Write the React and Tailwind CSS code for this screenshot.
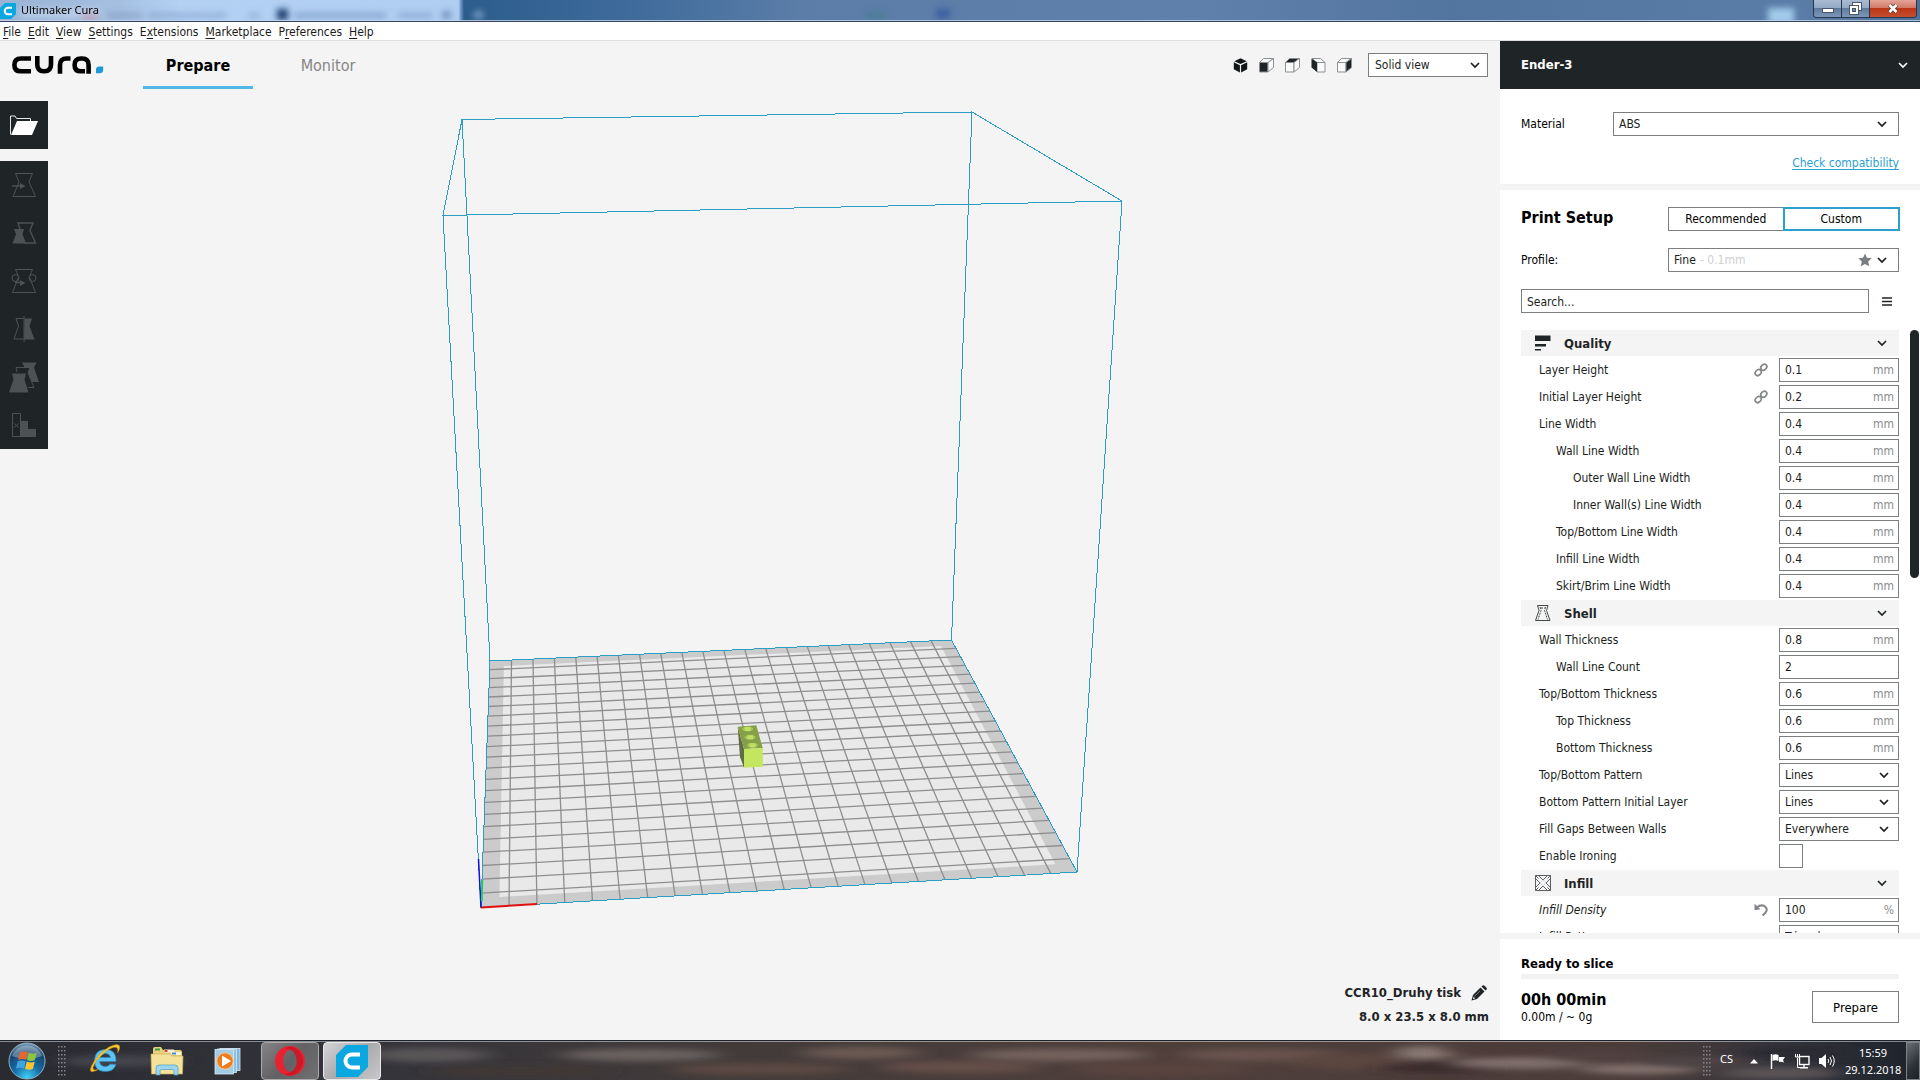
import React from 'react';

/* ---------- small icons ---------- */
function Chevron({ className = '' }) {
  return (
    <svg viewBox="0 0 10 7" className={`h-[7px] w-[10px] shrink-0 ${className}`} aria-hidden="true">
      <path d="M1 1l4 4 4-4" fill="none" stroke="currentColor" strokeWidth="1.700" />
    </svg>
  );
}

function CuraMark({ className }) {
  return (
    <svg viewBox="0 0 32 32" className={className} aria-hidden="true">
      <path d="M10 0h22v22L22 32H0V10z" fill="#0ba7e0" />
      <path d="M24 9.5h-8a6.5 6.5 0 0 0 0 13h8" fill="none" stroke="#fff" strokeWidth="4" />
    </svg>
  );
}

function CuraLogo() {
  return (
    <svg viewBox="0 0 92 18" className="h-[18px] w-[92px]" role="img" aria-label="cura.">
      <g fill="none" stroke="#000" strokeWidth="4.6">
        <path d="M19 2.5H9Q2.4 2.5 2.4 8.9T9 15.3H19" />
        <path d="M25.3 0V8.6Q25.3 15.3 31.8 15.3H32.4Q39 15.3 39 8.6V0" />
        <path d="M48 17.8V9Q48 2.5 54.5 2.5H58.5" />
        <path d="M76.6 17.8V9Q76.6 2.5 70.2 2.5H69Q62.6 2.5 62.6 8.9T69 15.3H73" />
      </g>
      <path d="M84 17.2V13.6Q84 10.4 87.2 10.4H91.2V13.8Q91.2 17.2 87.8 17.2z" fill="#1f9ad6" />
    </svg>
  );
}

const CUBE_FRONT = 'M.5 4.5h8.5v9.5H.5z';
const CUBE_TOP = 'M.5 4.5L4.5.5h10L9 4.5z';
const CUBE_SIDE = 'M9 4.5L14.5.5v9L9 14z';

function CubeIcon({ kind }) {
  if (kind === '3d') {
    return (
      <svg viewBox="0 0 15 15" className="size-[15px]" aria-hidden="true">
        <path d="M7.5.3l6.2 2.9-6.2 2.9-6.2-2.9z" fill="#111618" />
        <path d="M.8 4.3l6.1 2.9v7.3L.8 11.3zM14.2 4.3L8.1 7.2v7.3l6.1-3.2z" fill="#111618" />
      </svg>
    );
  }
  const dark = '#1f2426';
  if (kind === 'left') {
    return (
      <svg viewBox="0 0 15 15" className="size-[15px]" aria-hidden="true">
        <g stroke="#8b9092" strokeWidth="1" fill="#fafafa" strokeLinejoin="round">
          <path d="M1 .5h8.5l4.500 4H6z" />
          <path d="M6 4.500h8V14H6z" />
        </g>
        <path d="M.5.5L6 4.500V14L.5 9.500z" fill={dark} />
      </svg>
    );
  }
  return (
    <svg viewBox="0 0 15 15" className="size-[15px]" aria-hidden="true">
      <g stroke="#8b9092" strokeWidth="1" strokeLinejoin="round">
        <path d={CUBE_FRONT} fill={kind === 'front' ? dark : '#fafafa'} />
        <path d={CUBE_TOP} fill={kind === 'top' ? dark : '#fafafa'} />
        <path d={CUBE_SIDE} fill={kind === 'right' ? dark : '#fafafa'} />
      </g>
    </svg>
  );
}

function ToolIcon({ kind }) {
  const c = '#4d5254';
  const shapes = {
    move: (
      <>
        <path d="M15.500 12.500h17l-3.500 8.500 6.500 14.500h-22.500l6-14.500z" fill="none" stroke={c} />
        <path d="M12 25h9" stroke={c} strokeWidth="1.500" />
        <path d="M20 22l5.500 3-5.500 3z" fill={c} />
      </>
    ),
    scale: (
      <>
        <path d="M20 20l-2-6h15l-3 7.500 5.500 12.500H24" fill="none" stroke={c} strokeWidth="1.400" />
        <path d="M14 20h10l-1.500 5 3.500 9.500H12.500l3.500-9.500z" fill={c} />
      </>
    ),
    rotate: (
      <>
        <path d="M15.500 12.500h17l-3 7.500 6 15.500h-23l6-15.500z" fill="none" stroke={c} />
        <circle cx="15.500" cy="21" r="3.500" fill="none" stroke={c} />
        <circle cx="32.500" cy="21" r="3.500" fill="none" stroke={c} />
        <path d="M15 25.500h6" stroke={c} strokeWidth="1.500" />
        <path d="M20 23l5.500 3-5.500 3z" fill={c} />
      </>
    ),
    mirror: (
      <>
        <path d="M23.500 13.500h-7.500l2.500 7.500-4.500 13h9.500" fill="none" stroke={c} />
        <path d="M24.500 13.500h7.500l-2.500 7.500 5 13.500H24z" fill={c} />
        <path d="M24 11v26" stroke={c} />
      </>
    ),
    perModel: (
      <>
        <path d="M22 9.500h14.500l-2.500 5 5 14.500h-7l-4-10 2-4h-5z" fill={c} />
        <path d="M17 19l-1-4.500h14l-2 5.500 6 14.500h-6" fill="none" stroke={c} />
        <path d="M12 20.500h14l-1.500 6 4 13H9l4.500-13z" fill={c} />
      </>
    ),
    support: (
      <>
        <path d="M12.500 12.500h8v23h-8z" fill="none" stroke={c} />
        <path d="M20.500 20h7.500v8h8v8H20.500z" fill={c} />
        <path d="M14.500 22.500l4 4m0-4l-4 4" stroke={c} />
      </>
    ),
  };
  return (
    <svg viewBox="0 0 48 48" className="size-12" aria-hidden="true">
      {shapes[kind]}
    </svg>
  );
}

function OpenIcon() {
  return (
    <svg viewBox="0 0 48 48" className="size-12" aria-hidden="true">
      <path d="M10.500 33.500V15h4.500l1.500 2.500h14V20" fill="none" stroke="#e8e8e8" />
      <path d="M17 20h21l-6 14H11z" fill="#fff" />
    </svg>
  );
}

function LinkIcon() {
  return (
    <svg viewBox="0 0 14 14" className="size-3.5" aria-hidden="true">
      <g fill="none" stroke="#838688" strokeWidth="1.700">
        <ellipse cx="4.200" cy="9.600" rx="3.300" ry="2.600" transform="rotate(-45 4.200 9.600)" />
        <ellipse cx="9.800" cy="4.200" rx="3.300" ry="2.600" transform="rotate(-45 9.800 4.200)" />
      </g>
    </svg>
  );
}

function ResetIcon() {
  return (
    <svg viewBox="0 0 14 14" className="size-3.5" aria-hidden="true">
      <path d="M2.500 4.500Q8 .5 11.500 4T8.500 12.500" fill="none" stroke="#838688" strokeWidth="2" />
      <path d="M.5.8v6.400l6-1z" fill="#838688" />
    </svg>
  );
}

function CategoryIcon({ kind }) {
  if (kind === 'quality') {
    return (
      <svg viewBox="0 0 16 16" className="size-4" aria-hidden="true">
        <path d="M0 .5h15.500v5.500H0zM0 9h11v2.500H0zM0 14h6v1.500H0z" fill="#1f2426" />
      </svg>
    );
  }
  if (kind === 'shell') {
    return (
      <svg viewBox="0 0 16 16" className="size-4" aria-hidden="true">
        <g fill="none" stroke="#44494b" strokeWidth="1">
          <path d="M2.500.5h10.500l-1.500 5 3.500 10H.5L4 5.500z" />
          <path d="M5 2l1 3.500-3 9M10.500 2l-1 3.500 3 9M6 3h3.500" strokeDasharray="2 1" />
        </g>
      </svg>
    );
  }
  return (
    <svg viewBox="0 0 16 16" className="size-4" aria-hidden="true">
      <g fill="none" stroke="#4c5052" strokeWidth=".9">
        <path d="M.5.5h15v15H.5z" />
        <path d="M3.500.5l12 12M.5 3.500l12 12M12.500.5l-12 12M15.500 3.500l-12 12M.5.5l3 3M15.500.5l-3 3M.5 15.500l3-3M15.500 15.500l-3-3" />
      </g>
      <path d="M8 4.600L11.400 8 8 11.400 4.600 8z" fill="#f4f4f4" />
    </svg>
  );
}

/* ---------- window chrome ---------- */
function TitleBar() {
  return (
    <header className="grid h-[22px] shrink-0 overflow-hidden border-b border-[#34455e] bg-[linear-gradient(90deg,#8fa9cc_0,#9db8dc_120px,#aecdf2_180px,#a9caf0_458px,#2c5d8b_464px,#3d6a9a_620px,#5b7da8_800px,#5f80aa_1200px,#52759f_1450px,#5a7da8_1800px,#4f7099_100%)]">
      <svg className="h-[21px] w-full [grid-area:1/1]" aria-hidden="true">
        <defs>
          <filter id="soft" x="-30%" y="-100%" width="160%" height="300%">
            <feGaussianBlur stdDeviation="3" />
          </filter>
        </defs>
        <rect x="0" y="0" width="460" height="21" fill="#cfe2fa" opacity=".18" />
        <g filter="url(#soft)">
          <rect x="82" y="12" width="16" height="8" fill="#c0607c" opacity=".7" />
          <rect x="20" y="8" width="80" height="10" fill="#c6d9f2" opacity=".6" />
          <rect x="108" y="13" width="34" height="5" fill="#6d87ad" opacity=".5" />
          <rect x="148" y="13" width="78" height="5" fill="#6d8fba" opacity=".5" />
          <rect x="248" y="13" width="12" height="5" fill="#7696c0" opacity=".5" />
          <rect x="277" y="9" width="11" height="11" fill="#1e3f6e" />
          <rect x="294" y="13" width="92" height="5" fill="#6587b5" opacity=".6" />
          <rect x="398" y="13" width="34" height="5" fill="#6587b5" opacity=".5" />
          <rect x="442" y="11" width="9" height="8" fill="#5c7ca8" opacity=".7" />
          <rect x="474" y="11" width="9" height="8" fill="#8fb2d8" opacity=".7" />
          <rect x="866" y="13" width="18" height="6" fill="#3e7f86" opacity=".6" />
          <rect x="936" y="9" width="14" height="9" fill="#2f4f9c" opacity=".7" />
          <rect x="1768" y="8" width="26" height="16" fill="#a9d3f2" opacity=".9" />
        </g>
        <rect y="20" width="100%" height="1" fill="#c6d6ea" opacity=".8" />
      </svg>
      <div className="flex items-start justify-between [grid-area:1/1]">
        <div className="flex h-[21px] items-center gap-[5px] font-['Noto_Sans',sans-serif] text-[11px] text-black">
          <CuraMark className="size-4" />
          <h1>Ultimaker Cura</h1>
        </div>
        <div className="mr-[3px] flex h-[18px] overflow-hidden rounded-b border border-t-0 border-[#25364d]">
          <button aria-label="Minimize" className="flex w-7 items-center justify-center border-r border-[#25364d] bg-[linear-gradient(#a9bbd1_0,#93aac6_45%,#5f7b9e_50%,#7d97b8_100%)]">
            <svg viewBox="0 0 12 6" className="mt-1 h-1.5 w-3" aria-hidden="true">
              <rect x=".5" y=".5" width="11" height="4" fill="#fff" stroke="#4a5566" />
            </svg>
          </button>
          <button aria-label="Restore" className="flex w-7 items-center justify-center border-r border-[#25364d] bg-[linear-gradient(#a9bbd1_0,#93aac6_45%,#5f7b9e_50%,#7d97b8_100%)]">
            <svg viewBox="0 0 13 13" className="size-[13px]" aria-hidden="true">
              <rect x="3.500" y=".5" width="9" height="8" fill="#fff" stroke="#4a5566" />
              <rect x=".5" y="3.500" width="9" height="9" fill="#fff" stroke="#4a5566" />
              <rect x="3.500" y="6.500" width="3" height="3" fill="#6f88a8" stroke="#4a5566" />
            </svg>
          </button>
          <button aria-label="Close" className="flex w-[46px] items-center justify-center bg-[linear-gradient(#e3a497_0,#d27a68_45%,#bd3417_50%,#c4502f_100%)]">
            <svg viewBox="0 0 12 11" className="h-[11px] w-3" aria-hidden="true">
              <path d="M2.500 2l7 7m0-7l-7 7" stroke="#5a3a3a" strokeWidth="4.200" />
              <path d="M2.500 2l7 7m0-7l-7 7" stroke="#fff" strokeWidth="2.600" />
            </svg>
          </button>
        </div>
      </div>
    </header>
  );
}

const MENUS = [
  ['', 'F', 'ile'], ['', 'E', 'dit'], ['', 'V', 'iew'], ['', 'S', 'ettings'],
  ['E', 'x', 'tensions'], ['', 'M', 'arketplace'], ['P', 'r', 'eferences'], ['', 'H', 'elp'],
];

function MenuBar() {
  return (
    <nav className="flex h-[19px] shrink-0 items-center gap-[7px] border-b border-[#dedede] bg-white pt-0.5 pl-[3px] leading-4 text-[#1a1a1a]">
      {MENUS.map(([a, b, c]) => (
        <button key={a + b + c}>
          {a}<span className="underline underline-offset-2">{b}</span>{c}
        </button>
      ))}
    </nav>
  );
}

/* ---------- 3D viewport ---------- */
const CORNERS = [[490, 661], [951.5, 640], [1077, 872], [481, 907.5]];

/* Projects plate coordinates (0..1, 0..1) onto the screen quad. */
function project(u, v) {
  const [[x0, y0], [x1, y1], [x2, y2], [x3, y3]] = CORNERS;
  const dx1 = x1 - x2, dx2 = x3 - x2, sx = x0 - x1 + x2 - x3;
  const dy1 = y1 - y2, dy2 = y3 - y2, sy = y0 - y1 + y2 - y3;
  const det = dx1 * dy2 - dx2 * dy1;
  const g = (sx * dy2 - dx2 * sy) / det;
  const h = (dx1 * sy - sx * dy1) / det;
  const a = x1 - x0 + g * x1, b = x3 - x0 + h * x3;
  const d = y1 - y0 + g * y1, e = y3 - y0 + h * y3;
  const w = g * u + h * v + 1;
  return [(a * u + b * v + x0) / w, (d * u + e * v + y0) / w];
}

const pts = (list) => list.map(([u, v]) => project(u, v).map((n) => n.toFixed(1)).join(',')).join(' ');
const CELLS = 22;
const INSET = 0.65 / CELLS;

function Viewport() {
  const lines = [];
  for (let i = 1; i < CELLS; i++) {
    lines.push(pts([[i / CELLS, 0], [i / CELLS, 1]]));
    lines.push(pts([[0, i / CELLS], [1, i / CELLS]]));
  }
  return (
    <svg viewBox="0 41 1500 999" className="size-full min-h-0 [grid-area:1/1]" role="img" aria-label="Build plate with model">
      <polygon points={pts([[0, 0], [1, 0], [1, 1], [0, 1]])} fill="#cbcbcb" />
      <polygon points={pts([[INSET, INSET], [1 - INSET, INSET], [1 - INSET, 1 - INSET], [INSET, 1 - INSET]])} fill="#e9e9ea" />
      <g fill="none" stroke="#8e8e8e" strokeWidth="1.300">
        {lines.map((p) => <polyline key={p} points={p} />)}
      </g>
      <g fill="none" stroke="#2b9dc6" strokeWidth="1" shapeRendering="crispEdges">
        <polygon points={pts([[0, 0], [1, 0], [1, 1], [0, 1]])} />
        <path d="M462 119.500L972 112 1122 201 443 215.500z" />
        <path d="M462 119.500L490 661M972 112L951.500 640M1122 201L1077 872M443 215.500L481 907.500" />
      </g>
      <path d="M481 907.500L478.500 859" stroke="#1010e0" strokeWidth="1.500" />
      <path d="M481.800 901L482.200 880" stroke="#1fd060" strokeWidth="2" />
      <path d="M481 907.500L537 904" stroke="#e01010" strokeWidth="2" />
      <path d="M737.700 726.700L744 749v18.700L740 757z" fill="#5f6c45" />
      <path d="M737.700 726.700l18.600-1.400 6.400 22.700-18.700 1z" fill="#869f49" />
      <path d="M744 749l18.700-1 .3 18.700-19 1z" fill="#c3e660" />
      {[[747.7, 729], [750.2, 737.3], [752.5, 745.3]].map(([x, y]) => (
        <g key={y}>
          <ellipse cx={x} cy={y} rx="5.500" ry="2.500" fill="#a5c254" />
          <rect x={x - 3} y={y - 2} width="6" height="4" fill="#bfe063" />
        </g>
      ))}
    </svg>
  );
}

function SelectBox({ id, label, options, className = '', pad = 'pl-[5px]', chevron = 'mr-[10px]', children }) {
  return (
    <div className={`grid h-6 items-center border border-[#7c7f80] bg-white text-[#1a1e20] ${className}`}>
      <select id={id} aria-label={label} className={`h-full w-full appearance-none bg-transparent outline-none [grid-area:1/1] ${pad}`}>
        {options.map((o) => <option key={o}>{o}</option>)}
      </select>
      {children}
      <Chevron className={`pointer-events-none justify-self-end [grid-area:1/1] ${chevron}`} />
    </div>
  );
}

function Stage() {
  return (
    <main className="grid min-w-0 flex-1 bg-[#f4f4f4]">
      <Viewport />
      <div className="z-10 flex min-h-0 flex-col [grid-area:1/1]">
        <div className="flex h-12 items-center justify-between pr-3">
          <div className="flex h-full items-center">
            <div className="flex w-[143px] pl-3">
              <CuraLogo />
            </div>
            <nav className="flex h-full gap-5 text-base">
              <button className="w-[110px] border-b-[3px] border-[#53b7e6] pt-1 font-bold text-black">Prepare</button>
              <button className="w-[110px] border-b-[3px] border-transparent pt-1 text-[#868686]">Monitor</button>
            </nav>
          </div>
          <div className="flex items-center gap-[11px]">
            {[['3d', '3D view'], ['front', 'Front view'], ['top', 'Top view'], ['left', 'Left view'], ['right', 'Right view']].map(([k, t]) => (
              <button key={k} aria-label={t}><CubeIcon kind={k} /></button>
            ))}
            <SelectBox label="View mode" options={['Solid view', 'Layer view', 'X-Ray view']} className="ml-[5px] w-[120px]" pad="pl-1.5" chevron="mr-[7px]" />
          </div>
        </div>
        <div className="mt-3 flex w-12 flex-col gap-3">
          <button aria-label="Open file" className="bg-[#1f2427]"><OpenIcon /></button>
          <div className="flex flex-col bg-[#1f2427]">
            {[['move', 'Move'], ['scale', 'Scale'], ['rotate', 'Rotate'], ['mirror', 'Mirror'], ['perModel', 'Per model settings'], ['support', 'Support blocker']].map(([k, t]) => (
              <button key={k} aria-label={t}><ToolIcon kind={k} /></button>
            ))}
          </div>
        </div>
        <div className="mt-auto flex flex-col items-end gap-2 pr-[11px] pb-[15px] text-[13px] leading-4 font-bold text-[#1f2427]">
          <div className="flex items-center gap-2.5">
            <span>CCR10_Druhy tisk</span>
            <button aria-label="Rename" className="mr-0.5">
              <svg viewBox="0 0 16 16" className="size-4" aria-hidden="true">
                <path d="M.5 15.500l1.500-5.500L9.500 2.500l4 4L6 14z" fill="#1f2427" />
                <path d="M10.500 1.500l1-1q1-.8 2 .2l1.800 1.800q1 1 .2 2l-1 1z" fill="#1f2427" />
                <path d="M2 14l.6-2.200L4.200 13.400z" fill="#f4f4f4" />
                <path d="M3.500 11.500L9 6" stroke="#777" />
              </svg>
            </button>
          </div>
          <span>8.0 x 23.5 x 8.0 mm</span>
        </div>
      </div>
    </main>
  );
}

/* ---------- settings sidebar ---------- */
const CATEGORIES = [
  {
    name: 'Quality', icon: 'quality',
    rows: [
      { label: 'Layer Height', value: '0.1', unit: 'mm', link: true },
      { label: 'Initial Layer Height', value: '0.2', unit: 'mm', link: true },
      { label: 'Line Width', value: '0.4', unit: 'mm' },
      { label: 'Wall Line Width', value: '0.4', unit: 'mm', level: 1 },
      { label: 'Outer Wall Line Width', value: '0.4', unit: 'mm', level: 2 },
      { label: 'Inner Wall(s) Line Width', value: '0.4', unit: 'mm', level: 2 },
      { label: 'Top/Bottom Line Width', value: '0.4', unit: 'mm', level: 1 },
      { label: 'Infill Line Width', value: '0.4', unit: 'mm', level: 1 },
      { label: 'Skirt/Brim Line Width', value: '0.4', unit: 'mm', level: 1 },
    ],
  },
  {
    name: 'Shell', icon: 'shell',
    rows: [
      { label: 'Wall Thickness', value: '0.8', unit: 'mm' },
      { label: 'Wall Line Count', value: '2', level: 1 },
      { label: 'Top/Bottom Thickness', value: '0.6', unit: 'mm' },
      { label: 'Top Thickness', value: '0.6', unit: 'mm', level: 1 },
      { label: 'Bottom Thickness', value: '0.6', unit: 'mm', level: 1 },
      { label: 'Top/Bottom Pattern', options: ['Lines', 'Concentric', 'Zig Zag'] },
      { label: 'Bottom Pattern Initial Layer', options: ['Lines', 'Concentric', 'Zig Zag'] },
      { label: 'Fill Gaps Between Walls', options: ['Everywhere', 'Nowhere'] },
      { label: 'Enable Ironing', check: true },
    ],
  },
  {
    name: 'Infill', icon: 'infill',
    rows: [
      { label: 'Infill Density', value: '100', unit: '%', reset: true },
      { label: 'Infill Pattern', options: ['Triangles', 'Grid', 'Lines'] },
    ],
  },
];

const INDENT = ['pl-[18px]', 'pl-[35px]', 'pl-[52px]'];

function SettingRow({ row }) {
  const id = row.label.replace(/\W+/g, '-').toLowerCase();
  return (
    <div className={`flex h-[27px] shrink-0 items-center pb-px ${INDENT[row.level || 0]}`}>
      <label htmlFor={id} className={`flex-1 ${row.reset ? 'italic' : ''}`}>{row.label}</label>
      {row.link && <button aria-label="Linked setting" className="mr-[11px]"><LinkIcon /></button>}
      {row.reset && <button aria-label="Reset value" className="mr-[11px]"><ResetIcon /></button>}
      <div className="w-[120px]">
        {row.check && (
          <input id={id} type="checkbox" className="block h-6 w-6 appearance-none border border-[#7c7f80] bg-white" />
        )}
        {row.options && <SelectBox id={id} label={row.label} options={row.options} chevron="mr-[9px]" />}
        {row.value && (
          <div className="flex h-6 items-center border border-[#7c7f80] bg-white pr-1 pl-[5px]">
            <input id={id} defaultValue={row.value} className="w-full min-w-0 flex-1 bg-transparent outline-none" />
            <span className="text-[#8a8c8d]">{row.unit}</span>
          </div>
        )}
      </div>
    </div>
  );
}

function Sidebar() {
  return (
    <aside className="flex w-[420px] shrink-0 flex-col bg-[#f4f4f4] text-[#1a1e20]">
      <button className="flex h-12 shrink-0 items-center justify-between bg-[#1f2427] pr-3 pl-[21px] text-[13px] font-bold text-white">
        Ender-3
        <Chevron />
      </button>
      <section className="mb-1.5 flex h-[95px] shrink-0 flex-col items-end bg-white pt-[23px] pr-[21px] pl-[21px]">
        <div className="flex w-full items-center justify-between">
          <span className="text-black">Material</span>
          <SelectBox label="Material" options={['ABS', 'PLA', 'PETG']} className="w-[286px]" chevron="mr-[11px]" />
        </div>
        <a href="#compatibility" className="mt-[19px] leading-4 text-[#2b9fce] underline underline-offset-2">Check compatibility</a>
      </section>

      <section className="flex min-h-0 flex-1 flex-col bg-white pt-[17px] pl-[21px]">
        <div className="flex items-center justify-between pr-5">
          <h2 className="pb-0.5 text-base leading-5 font-bold text-black">Print Setup</h2>
          <div className="flex h-6 w-[232px] text-black">
            <button className="flex-1 border border-r-0 border-[#7c7f80]">Recommended</button>
            <button className="flex-1 border-2 border-[#2b9fce]">Custom</button>
          </div>
        </div>
        <div className="mt-[17px] flex items-center justify-between pr-[21px]">
          <span className="text-black">Profile:</span>
          <SelectBox label="Profile" options={['Fine', 'Normal', 'Draft']} className="w-[231px]" chevron="mr-[11px]">
            <span className="pointer-events-none flex items-center justify-between pr-[26px] pl-[31px] text-[#d0d0d0] [grid-area:1/1]">
              - 0.1mm
              <svg viewBox="0 0 14 14" className="size-3.5" aria-hidden="true">
                <path d="M7 .5l1.900 4.300 4.800.5-3.500 3.200 1 4.800L7 11l-4.200 2.300 1-4.800L.3 5.300l4.800-.5z" fill="#7b7e80" />
              </svg>
            </span>
          </SelectBox>
        </div>
        <div className="mt-[17px] flex items-center pr-[21px]">
          <input aria-label="Search settings" placeholder="Search..." className="h-6 w-[348px] border border-[#7c7f80] bg-white px-[5px] pt-0.5 outline-none placeholder:text-[#1a1e20]" />
          <button aria-label="Setting visibility" className="ml-[13px]">
            <svg viewBox="0 0 10 9" className="h-[9px] w-[10px]" aria-hidden="true">
              <path d="M0 1h10M0 4.500h10M0 8h10" stroke="#1f2427" strokeWidth="1.600" />
            </svg>
          </button>
        </div>
        <div className="mt-[17px] flex min-h-0 flex-1 overflow-hidden">
          <div className="flex flex-1 flex-col overflow-hidden">
            {CATEGORIES.map((cat) => (
              <React.Fragment key={cat.name}>
                <button className="mb-px flex h-[26px] shrink-0 items-center bg-[#f4f4f4] pr-3 pl-3.5 text-left text-[13px] font-bold text-[#1f2427]">
                  <CategoryIcon kind={cat.icon} />
                  <span className="ml-[13px] flex-1 pt-0.5">{cat.name}</span>
                  <Chevron />
                </button>
                {cat.rows.map((row) => <SettingRow key={row.label} row={row} />)}
              </React.Fragment>
            ))}
          </div>
          <div className="flex w-[21px] shrink-0 justify-end pr-px">
            <div className="h-[248px] w-[9px] rounded-full bg-[#1f2427]" />
          </div>
        </div>
      </section>

      <section className="mt-1.5 flex h-[101px] shrink-0 flex-col bg-white pt-[17px] pr-[21px] pl-[21px] text-black">
        <p className="text-[13px] leading-4 font-bold">Ready to slice</p>
        <div className="mt-0.5 h-[5px] shrink-0 bg-[#f2f2f2]" />
        <div className="mt-3 flex items-start justify-between">
          <div>
            <p className="text-base leading-[18px] font-bold">00h 00min</p>
            <p className="leading-4">0.00m / ~ 0g</p>
          </div>
          <button className="h-8 w-[87px] border border-[#7c7f80] bg-white pt-0.5 text-[13px]">Prepare</button>
        </div>
      </section>
    </aside>
  );
}

/* ---------- taskbar ---------- */
function Grip() {
  return (
    <svg viewBox="0 0 9 31" className="h-[31px] w-[9px]" aria-hidden="true">
      {Array.from({ length: 24 }, (_, i) => (
        <rect key={i} x={(i % 3) * 3} y={Math.floor(i / 3) * 4} width="1.500" height="1.500" fill="#85858a" />
      ))}
    </svg>
  );
}

function Backdrop() {
  const streaks = [
    [120, 20, 60, 6, '#45454d'], [430, 14, 60, 7, '#5a5658'], [520, 30, 90, 5, '#3f3834'], [640, 14, 80, 6, '#6b6362'],
    [760, 28, 90, 6, '#5c4842'], [860, 12, 60, 6, '#6c5a52'], [960, 26, 80, 6, '#66504a'], [1060, 14, 90, 6, '#75645d'],
    [1160, 28, 90, 6, '#5a453f'], [1260, 14, 80, 6, '#6a5550'], [1350, 20, 60, 8, '#5b4640'], [1425, 12, 30, 7, '#8b7b76'],
    [1440, 27, 60, 5, '#38292a'], [1520, 22, 70, 6, '#80706c'], [1500, 8, 60, 4, '#4d3b38'], [1600, 15, 50, 5, '#514341'],
    [1640, 28, 60, 5, '#85746f'], [1700, 20, 60, 5, '#4f4546'], [1780, 32, 60, 6, '#5b5557'], [1800, 12, 60, 7, '#2a2c33'],
  ];
  return (
    <svg viewBox="0 0 1920 39" preserveAspectRatio="none" className="h-[39px] w-full [grid-area:1/1]" aria-hidden="true">
      <defs>
        <filter id="haze" x="-30%" y="-80%" width="160%" height="260%">
          <feGaussianBlur stdDeviation="12 3" />
        </filter>
      </defs>
      {streaks.map(([x, y, rx, ry, c]) => (
        <ellipse key={x} cx={x} cy={y} rx={rx} ry={ry} fill={c} filter="url(#haze)" />
      ))}
    </svg>
  );
}

function Taskbar() {
  return (
    <footer className="grid h-10 shrink-0 overflow-hidden border-t border-[#1c232d] bg-[linear-gradient(90deg,#2a2a31_0,#33333a_18%,#403a3a_35%,#4f3f3b_60%,#4b3c3a_85%,#33343b_93%,#1d222c_100%)]">
      <Backdrop />
      <div className="flex items-center justify-between border-t border-white/45 text-white [grid-area:1/1]">
        <div className="flex h-full items-center">
          <button aria-label="Start" className="ml-2">
            <svg viewBox="0 0 38 38" className="size-[38px]" aria-hidden="true">
              <defs>
                <radialGradient id="orb" cx=".5" cy=".95" r=".95">
                  <stop offset="0" stopColor="#3fd0f5" />
                  <stop offset=".4" stopColor="#156ba8" />
                  <stop offset=".75" stopColor="#18466e" />
                  <stop offset="1" stopColor="#7fa3bd" />
                </radialGradient>
              </defs>
              <circle cx="19" cy="19" r="18" fill="url(#orb)" stroke="#8fb0c4" />
              <path d="M4 14A16 16 0 0 1 34 14Q19 20 4 14z" fill="#fff" opacity=".3" />
              <path d="M12 10.500q4-2 7.500-.2L18 17.800q-4-1.500-8 .2z" fill="#e8662a" />
              <path d="M20.700 10.800q4 1.800 8 0l-2 7.500q-4 1.500-7.700-.2z" fill="#8cc63f" />
              <path d="M9.600 19.200q4-1.600 8 0L16 26.500q-4-1.600-8 .2z" fill="#3fa4e0" />
              <path d="M18.800 19.500q4 1.800 8 .2l-2 7.300q-4 1.700-7.800-.2z" fill="#fbc52e" />
            </svg>
          </button>
          <div className="ml-3"><Grip /></div>
          <button aria-label="Internet Explorer" className="ml-[22px] pb-1">
            <svg viewBox="0 0 32 32" className="size-8" aria-hidden="true">
              <path d="M27 18.500H10.500q.8 5 6 5 3 0 4.500-2.300h6Q25 28.500 16.500 28.500 5.500 28.500 5.500 17.500 6 6.500 16.500 6.500 27.500 6.500 27 18.500zM21.500 14.500q-.8-4-5-4t-5.500 4z" fill="#5cc4f2" stroke="#2a86c4" strokeWidth=".7" fillRule="evenodd" />
              <path d="M6 28Q-1 31 2.500 23 8 11 20 4 29-.5 30.500 3q1 2.500-2 7 1-4.500-1-5.500Q23 3 14 11 6 18 4 24.500 3.500 28.500 9.500 26 8 27.500 6 28z" fill="#f6c52c" stroke="#c48d12" strokeWidth=".4" />
            </svg>
          </button>
          <button aria-label="Windows Explorer" className="ml-[29px]">
            <svg viewBox="0 0 34 30" className="h-[30px] w-[34px]" aria-hidden="true">
              <path d="M3 3q0-2 2-2h6l2 3h17q2 0 2 2v8H3z" fill="#e8cf7a" />
              <path d="M5 2.500h5v2H5z" fill="#38a048" />
              <path d="M14 3.500h10l1 3H14z" fill="#f4f0dc" />
              <path d="M14.500 4h3v2h-3z" fill="#d04a2a" />
              <path d="M21 6h10v3H21z" fill="#f6f2e0" />
              <path d="M22 6.500h4v2h-4z" fill="#3c8fd0" />
              <path d="M1 8h20l1 2h11l-.5 18H1.500z" fill="#f5e29a" stroke="#cfae54" strokeWidth=".6" />
              <path d="M6 29v-7q0-3 3-3h16q3 0 3 3v7h-4v-4q0-1.500-1.500-1.500h-11Q10 23.500 10 25v4z" fill="#9fd4ee" stroke="#4e9cc4" strokeWidth=".7" />
            </svg>
          </button>
          <button aria-label="Media Player" className="ml-[30px]">
            <svg viewBox="0 0 28 28" className="size-7" aria-hidden="true">
              <rect x="6" y="1.500" width="20" height="22" fill="#7fb4d8" stroke="#d5eaf6" strokeWidth=".8" />
              <rect x="3.500" y="2" width="19" height="23.500" fill="#8fc0e0" stroke="#d5eaf6" strokeWidth=".8" />
              <rect x="1" y="2.500" width="18.500" height="24.500" fill="#a3cde6" stroke="#d5eaf6" strokeWidth=".8" />
              <circle cx="11" cy="14" r="8.200" fill="#ee7d22" stroke="#fbd0a0" strokeWidth=".8" />
              <path d="M8 8.500l9 5.500-9 5.500z" fill="#fff" />
            </svg>
          </button>
          <button aria-label="Opera" className="ml-[19px] flex h-[38px] w-[58px] items-center justify-center rounded-sm border border-[#aaa9ab] bg-[linear-gradient(135deg,#858385,#626163_50%,#707072)]">
            <svg viewBox="0 0 32 32" className="size-8" aria-hidden="true">
              <path d="M16 1a15 15 0 1 0 0 30a15 15 0 1 0 0-30zM16 5a6.800 11 0 1 1 0 22a6.800 11 0 1 1 0-22z" fill="#ea2130" fillRule="evenodd" />
              <path d="M17 1.500a15 14.800 0 0 1 0 29Q13 31 11 29 22.800 27 22.800 16T12 3.500Q14 1 17 1.500z" fill="#b01020" opacity=".5" />
            </svg>
          </button>
          <button aria-label="Ultimaker Cura" className="ml-1 flex h-[38px] w-[58px] items-center justify-center rounded-sm border border-[#e8e8ea] bg-[linear-gradient(135deg,#d5d4d6,#a9a8aa_50%,#c8c7c9)]">
            <CuraMark className="size-8" />
          </button>
        </div>
        <div className="flex h-full items-center">
          <Grip />
          <span className="ml-2 pb-1 font-['Noto_Sans',sans-serif] text-[11px]">CS</span>
          <button aria-label="Show hidden icons" className="ml-[17px]">
            <svg viewBox="0 0 8 5" className="h-[5px] w-2" aria-hidden="true"><path d="M4 0l4 4.500H0z" fill="#fff" /></svg>
          </button>
          <svg viewBox="0 0 16 16" className="ml-3 size-4" aria-hidden="true">
            <path d="M1.500 1v15" stroke="#fff" strokeWidth="1.400" />
            <path d="M2.500 2q3-1.500 6 0v6q-3-1.500-6 0z" fill="#fff" />
            <path d="M9 4h6l-2 3 1 2.500q-3-1-5-.5z" fill="#fff" />
          </svg>
          <svg viewBox="0 0 16 16" className="ml-2 size-4" fill="none" stroke="#fff" aria-hidden="true">
            <rect x="5.500" y="3.500" width="9.500" height="8" strokeWidth="1.400" />
            <path d="M10 12v2M6 14.700h8" strokeWidth="1.400" />
            <path d="M1.500 1v3h4V1M3.500 1v3M3.500 5v9.500H6" />
          </svg>
          <svg viewBox="0 0 17 16" className="ml-2 h-4 w-[17px]" aria-hidden="true">
            <path d="M1 5h2.500L8 1v14l-4.500-4H1z" fill="#fff" />
            <path d="M10 6q1.500 2 0 4M12 4q3 4 0 8M14.500 2.500q3.500 5.500 0 11" fill="none" stroke="#fff" strokeWidth="1" />
          </svg>
          <div className="ml-2.5 w-14 text-center font-['Noto_Sans',sans-serif] text-[11px] leading-[17px]">
            <p>15:59</p>
            <p>29.12.2018</p>
          </div>
          <button aria-label="Show desktop" className="ml-[5px] h-full w-3.5 border border-[#7d8288] bg-[linear-gradient(135deg,#6a6f77,#2d3138_60%,#1c2026)]" />
        </div>
      </div>
    </footer>
  );
}

export default function App() {
  return (
    <div className="flex h-screen flex-col overflow-hidden bg-white font-['DejaVu_Sans_Condensed','DejaVu_Sans',sans-serif] text-xs">
      <TitleBar />
      <MenuBar />
      <div className="flex min-h-0 flex-1">
        <Stage />
        <Sidebar />
      </div>
      <Taskbar />
    </div>
  );
}
